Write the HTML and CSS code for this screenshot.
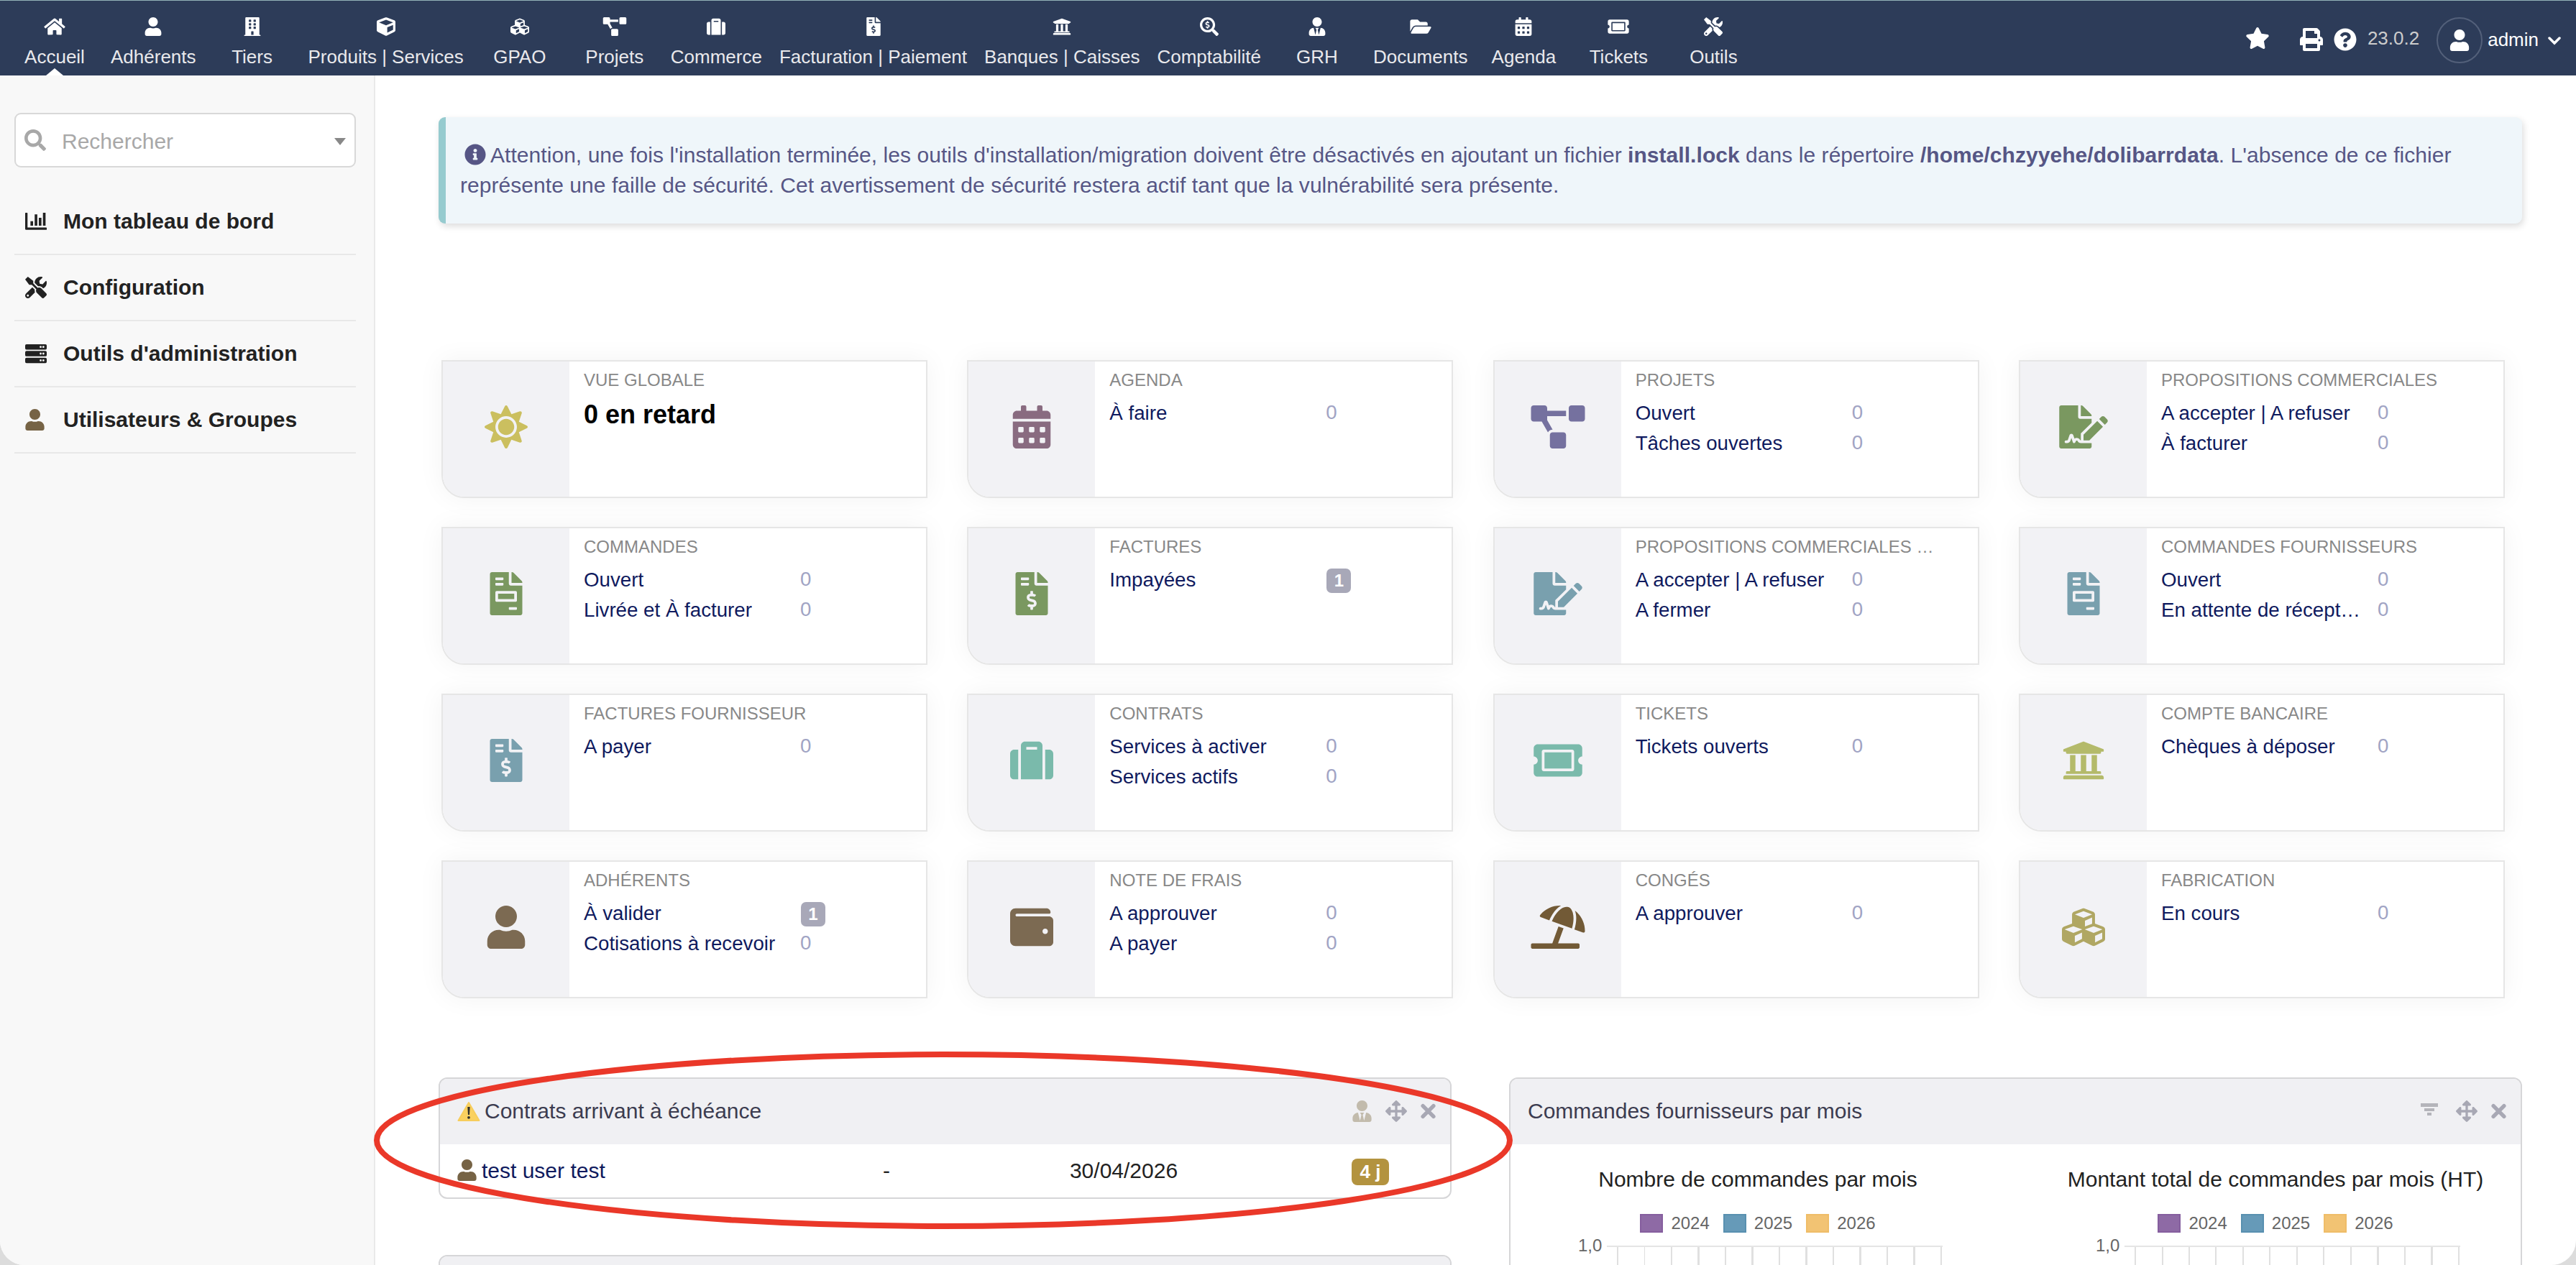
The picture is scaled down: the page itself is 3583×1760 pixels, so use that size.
FILE: index.html
```html
<!DOCTYPE html>
<html lang="fr">
<head>
    <meta charset="UTF-8">
    <meta name="viewport" content="width=device-width, initial-scale=1.0">
    <title>Dolibarr - Accueil</title>
    <link rel="stylesheet" href="styles.css">
</head>
<body>

<!-- Icons -->
<svg class="sprite">
    <symbol id="home" viewBox="0 0 576 512"><path d="M280.37 148.26L96 300.11V464a16 16 0 0 0 16 16l112.06-.29a16 16 0 0 0 15.92-16V368a16 16 0 0 1 16-16h64a16 16 0 0 1 16 16v95.64a16 16 0 0 0 16 16.05L464 480a16 16 0 0 0 16-16V300L295.67 148.26a12.19 12.19 0 0 0-15.3 0zM571.6 251.47L488 182.56V44.05a12 12 0 0 0-12-12h-56a12 12 0 0 0-12 12v72.61L318.47 43a48 48 0 0 0-61 0L4.34 251.47a12 12 0 0 0-1.6 16.9l25.5 31A12 12 0 0 0 45.15 301l235.22-193.74a12.19 12.19 0 0 1 15.3 0L530.9 301a12 12 0 0 0 16.9-1.6l25.5-31a12 12 0 0 0-1.7-16.93z"/></symbol>
    <symbol id="user" viewBox="0 0 448 512"><path d="M224 256c70.7 0 128-57.3 128-128S294.7 0 224 0 96 57.3 96 128s57.3 128 128 128zm89.6 32h-16.7c-22.2 10.2-46.9 16-72.9 16s-50.6-5.8-72.9-16h-16.7C60.2 288 0 348.2 0 422.4V464c0 26.5 21.5 48 48 48h352c26.5 0 48-21.5 48-48v-41.6c0-74.2-60.2-134.4-134.4-134.4z"/></symbol>
    <symbol id="building" viewBox="0 0 448 512"><path d="M436 480h-20V24c0-13.255-10.745-24-24-24H56C42.745 0 32 10.745 32 24v456H12c-6.627 0-12 5.373-12 12v20h448v-20c0-6.627-5.373-12-12-12zM128 76c0-6.627 5.373-12 12-12h40c6.627 0 12 5.373 12 12v40c0 6.627-5.373 12-12 12h-40c-6.627 0-12-5.373-12-12V76zm0 96c0-6.627 5.373-12 12-12h40c6.627 0 12 5.373 12 12v40c0 6.627-5.373 12-12 12h-40c-6.627 0-12-5.373-12-12v-40zm52 148h-40c-6.627 0-12-5.373-12-12v-40c0-6.627 5.373-12 12-12h40c6.627 0 12 5.373 12 12v40c0 6.627-5.373 12-12 12zm76 160h-64v-84c0-6.627 5.373-12 12-12h40c6.627 0 12 5.373 12 12v84zm64-172c0 6.627-5.373 12-12 12h-40c-6.627 0-12-5.373-12-12v-40c0-6.627 5.373-12 12-12h40c6.627 0 12 5.373 12 12v40zm0-96c0 6.627-5.373 12-12 12h-40c-6.627 0-12-5.373-12-12v-40c0-6.627 5.373-12 12-12h40c6.627 0 12 5.373 12 12v40zm0-96c0 6.627-5.373 12-12 12h-40c-6.627 0-12-5.373-12-12V76c0-6.627 5.373-12 12-12h40c6.627 0 12 5.373 12 12v40z"/></symbol>
    <symbol id="cube" viewBox="0 0 512 512"><path d="M239.1 6.3l-208 78c-18.7 7-31.1 25-31.1 45v225.1c0 18.2 10.3 34.8 26.5 42.9l208 104c13.5 6.8 29.4 6.8 42.9 0l208-104c16.3-8.1 26.5-24.8 26.5-42.9V129.3c0-20-12.4-37.9-31.1-44.9l-208-78C262 2.2 250 2.2 239.1 6.3zM256 68.4l192 72v1.1l-192 78-192-78v-1.1l192-72zm32 356V275.5l160-65v133.9l-160 80z"/></symbol>
    <symbol id="cubes" viewBox="0 0 512 512"><path d="M488.6 250.2L392 214V105.5c0-15-9.3-28.4-23.4-33.7l-100-37.5c-8.1-3.1-17.1-3.1-25.3 0l-100 37.5c-14.1 5.3-23.4 18.7-23.4 33.7V214l-96.6 36.2C9.3 255.5 0 268.9 0 283.9V394c0 13.6 7.7 26.1 19.9 32.2l100 50c10.1 5.1 22.1 5.1 32.2 0l103.9-52 103.9 52c10.1 5.1 22.1 5.1 32.2 0l100-50c12.2-6.1 19.9-18.6 19.9-32.2V283.9c0-15-9.3-28.4-23.4-33.7zM358 214.8l-85 31.9v-68.2l85-37v73.3zM154 104.1l102-38.2 102 38.2v.6l-102 41.4-102-41.4v-.6zm84 291.1l-85 42.5v-79.1l85-38.8v75.4zm0-112l-102 41.4-102-41.4v-.6l102-38.2 102 38.2v.6zm240 112l-85 42.5v-79.1l85-38.8v75.4zm0-112l-102 41.4-102-41.4v-.6l102-38.2 102 38.2v.6z"/></symbol>
    <symbol id="project" viewBox="0 0 640 512"><path d="M384 320H256c-17.67 0-32 14.33-32 32v128c0 17.67 14.33 32 32 32h128c17.67 0 32-14.33 32-32V352c0-17.67-14.33-32-32-32zM192 32c0-17.67-14.33-32-32-32H32C14.33 0 0 14.33 0 32v128c0 17.67 14.33 32 32 32h95.72l73.16 128.04C211.98 300.98 232.4 288 256 288h.28L192 175.51V128h224V64H192V32zM608 0H480c-17.67 0-32 14.33-32 32v128c0 17.67 14.33 32 32 32h128c17.67 0 32-14.33 32-32V32c0-17.67-14.33-32-32-32z"/></symbol>
    <symbol id="suitcase" viewBox="0 0 512 512"><path d="M128 480h256V80c0-26.5-21.5-48-48-48H176c-26.5 0-48 21.5-48 48v400zm64-384h128v32H192V96zm320 80v256c0 26.5-21.5 48-48 48h-48V128h48c26.5 0 48 21.5 48 48zM96 480H48c-26.5 0-48-21.5-48-48V176c0-26.5 21.5-48 48-48h48v352z"/></symbol>
    <symbol id="invoice-dollar" viewBox="0 0 384 512"><path d="M377 105L279.1 7c-4.5-4.5-10.6-7-17-7H256v128h128v-6.1c0-6.3-2.5-12.4-7-16.9zm-153 31V0H24C10.7 0 0 10.7 0 24v464c0 13.3 10.7 24 24 24h336c13.3 0 24-10.7 24-24V160H248c-13.2 0-24-10.8-24-24zM64 72c0-4.42 3.58-8 8-8h80c4.42 0 8 3.58 8 8v16c0 4.42-3.58 8-8 8H72c-4.42 0-8-3.58-8-8V72zm0 80v-16c0-4.42 3.58-8 8-8h80c4.42 0 8 3.58 8 8v16c0 4.42-3.58 8-8 8H72c-4.42 0-8-3.58-8-8zm144 263.88V440c0 4.42-3.58 8-8 8h-16c-4.42 0-8-3.58-8-8v-24.29c-11.29-.58-22.27-4.52-31.37-11.35-3.9-2.93-4.1-8.77-.57-12.14l11.75-11.21c2.77-2.64 6.89-2.76 10.13-.73 3.87 2.42 8.26 3.72 12.82 3.72h28.11c6.5 0 11.8-5.92 11.8-13.19 0-5.95-3.61-11.19-8.77-12.73l-45-13.5c-18.59-5.58-31.58-23.42-31.58-43.39 0-24.52 19.05-44.44 42.67-45.07V232c0-4.42 3.58-8 8-8h16c4.42 0 8 3.58 8 8v24.29c11.29.58 22.27 4.51 31.37 11.35 3.9 2.93 4.1 8.77.57 12.14l-11.75 11.21c-2.77 2.64-6.89 2.76-10.13.73-3.87-2.43-8.26-3.72-12.82-3.72h-28.11c-6.5 0-11.8 5.92-11.8 13.19 0 5.95 3.61 11.19 8.77 12.73l45 13.5c18.59 5.58 31.58 23.42 31.58 43.39 0 24.53-19.05 44.44-42.67 45.07z"/></symbol>
    <symbol id="invoice" viewBox="0 0 384 512"><path d="M288 256H96v64h192v-64zm89-151L279.1 7c-4.5-4.5-10.6-7-17-7H256v128h128v-6.1c0-6.3-2.5-12.4-7-16.9zm-153 31V0H24C10.7 0 0 10.7 0 24v464c0 13.3 10.7 24 24 24h336c13.3 0 24-10.7 24-24V160H248c-13.2 0-24-10.8-24-24zM64 72c0-4.42 3.58-8 8-8h80c4.42 0 8 3.58 8 8v16c0 4.42-3.58 8-8 8H72c-4.42 0-8-3.58-8-8V72zm0 64c0-4.42 3.58-8 8-8h80c4.42 0 8 3.58 8 8v16c0 4.42-3.58 8-8 8H72c-4.42 0-8-3.58-8-8v-16zm256 304c0 4.42-3.58 8-8 8h-80c-4.42 0-8-3.58-8-8v-16c0-4.42 3.58-8 8-8h80c4.42 0 8 3.58 8 8v16zm0-200v96c0 8.84-7.16 16-16 16H80c-8.84 0-16-7.16-16-16v-96c0-8.84 7.16-16 16-16h224c8.84 0 16 7.16 16 16z"/></symbol>
    <symbol id="bank" viewBox="0 0 512 512"><path d="M496 128v16a8 8 0 0 1-8 8h-24v12c0 6.627-5.373 12-12 12H60c-6.627 0-12-5.373-12-12v-12H24a8 8 0 0 1-8-8v-16a8 8 0 0 1 4.941-7.392l232-88a7.996 7.996 0 0 1 6.118 0l232 88A8 8 0 0 1 496 128zm-24 304H40c-13.255 0-24 10.745-24 24v16a8 8 0 0 0 8 8h464a8 8 0 0 0 8-8v-16c0-13.255-10.745-24-24-24zM96 192v192H60c-6.627 0-12 5.373-12 12v20h416v-20c0-6.627-5.373-12-12-12h-36V192h-64v192h-64V192h-64v192h-64V192H96z"/></symbol>
    <symbol id="search-dollar" viewBox="0 0 512 512"><path d="M505.04 442.66l-99.71-99.69c-4.5-4.5-10.6-7-17-7h-16.3c27.6-35.3 44-79.69 44-127.99C416.03 93.09 322.92 0 208.02 0S0 93.09 0 207.98s93.11 207.98 208.02 207.98c48.3 0 92.71-16.4 128.01-44v16.3c0 6.4 2.5 12.5 7 17l99.71 99.69c9.4 9.4 24.6 9.4 33.9 0l28.3-28.3c9.4-9.4 9.4-24.59.1-33.99zm-297.02-90.7c-79.54 0-144-64.34-144-143.98 0-79.53 64.35-143.98 144-143.98 79.54 0 144 64.34 144 143.98 0 79.53-64.35 143.98-144 143.98zm27.11-152.54l-45.01-13.5c-5.16-1.55-8.77-6.78-8.77-12.73 0-7.27 5.3-13.19 11.8-13.19h28.1c4.56 0 8.96 1.29 12.82 3.72 3.24 2.03 7.36 1.91 10.13-.73l11.75-11.21c3.53-3.37 3.33-9.21-.57-12.14-9.1-6.83-20.08-10.77-31.37-11.35V112c0-4.42-3.58-8-8-8h-16c-4.42 0-8 3.58-8 8v16.12c-23.63.63-42.68 20.55-42.68 45.07 0 19.97 12.99 37.81 31.58 43.39l45.01 13.5c5.16 1.55 8.77 6.78 8.77 12.73 0 7.27-5.3 13.19-11.8 13.19h-28.1c-4.56 0-8.96-1.29-12.82-3.72-3.24-2.03-7.36-1.91-10.13.73l-11.75 11.21c-3.53 3.37-3.33 9.21.57 12.14 9.1 6.83 20.08 10.77 31.37 11.35V304c0 4.42 3.58 8 8 8h16c4.42 0 8-3.58 8-8v-16.12c23.63-.63 42.68-20.54 42.68-45.07 0-19.97-12.99-37.81-31.59-43.39z"/></symbol>
    <symbol id="user-tie" viewBox="0 0 448 512"><path d="M224 256c70.7 0 128-57.3 128-128S294.7 0 224 0 96 57.3 96 128s57.3 128 128 128zm95.8 32.6L272 480l-32-136 32-56h-96l32 56-32 136-47.8-191.4C56.9 292 0 350.3 0 422.4V464c0 26.5 21.5 48 48 48h352c26.5 0 48-21.5 48-48v-41.6c0-72.1-56.9-130.4-128.2-133.8z"/></symbol>
    <symbol id="folder" viewBox="0 0 576 512"><path d="M572.694 292.093L500.27 416.248A63.997 63.997 0 0 1 444.989 448H45.025c-18.523 0-30.064-20.093-20.731-36.093l72.424-124.155A64 64 0 0 1 152 256h399.964c18.523 0 30.064 20.093 20.73 36.093zM152 224h328v-48c0-26.51-21.49-48-48-48H272l-64-64H48C21.49 64 0 85.49 0 112v278.046l69.077-118.418C86.214 242.25 117.989 224 152 224z"/></symbol>
    <symbol id="calendar" viewBox="0 0 448 512"><path fill-rule="evenodd" d="M0 464c0 26.5 21.5 48 48 48h352c26.5 0 48-21.5 48-48V192H0v272zM332 256h40q12 0 12 12v40q0 12-12 12h-40q-12 0-12-12v-40q0-12 12-12zM332 384h40q12 0 12 12v40q0 12-12 12h-40q-12 0-12-12v-40q0-12 12-12zM204 256h40q12 0 12 12v40q0 12-12 12h-40q-12 0-12-12v-40q0-12 12-12zM204 384h40q12 0 12 12v40q0 12-12 12h-40q-12 0-12-12v-40q0-12 12-12zM76 256h40q12 0 12 12v40q0 12-12 12H76q-12 0-12-12v-40q0-12 12-12zM76 384h40q12 0 12 12v40q0 12-12 12H76q-12 0-12-12v-40q0-12 12-12zM400 64h-48V16c0-8.8-7.2-16-16-16h-32c-8.8 0-16 7.2-16 16v48H160V16c0-8.8-7.2-16-16-16h-32c-8.8 0-16 7.2-16 16v48H48C21.5 64 0 85.5 0 112v48h448v-48c0-26.5-21.5-48-48-48z"/></symbol>
    <symbol id="ticket" viewBox="0 0 576 512"><path d="M128 160h320v192H128V160zm400 96c0 26.51 21.49 48 48 48v96c0 26.51-21.49 48-48 48H48c-26.51 0-48-21.49-48-48v-96c26.51 0 48-21.49 48-48s-21.49-48-48-48v-96c0-26.51 21.49-48 48-48h480c26.51 0 48 21.49 48 48v96c-26.51 0-48 21.49-48 48zm-48-104c0-13.255-10.745-24-24-24H120c-13.255 0-24 10.745-24 24v208c0 13.255 10.745 24 24 24h336c13.255 0 24-10.745 24-24V152z"/></symbol>
    <symbol id="tools" viewBox="0 0 512 512"><path d="M501.1 395.7L384 278.6c-23.1-23.1-57.6-27.6-85.4-13.9L192 158.1V96L64 0 0 64l96 128h62.1l106.6 106.6c-13.6 27.8-9.2 62.3 13.9 85.4l117.1 117.1c14.6 14.6 38.2 14.6 52.7 0l52.7-52.7c14.5-14.6 14.5-38.2 0-52.7zM331.7 225c28.3 0 54.9 11 74.9 31l19.4 19.4c15.8-6.9 30.8-16.5 43.8-29.5 37.1-37.1 49.7-89.3 37.9-136.7-2.2-9-13.5-12.1-20.1-5.5l-74.4 74.4-67.9-11.3L334 98.9l74.4-74.4c6.6-6.6 3.4-17.9-5.7-20.2-47.4-11.7-99.6.9-136.6 37.9-28.5 28.5-41.9 66.1-41.2 103.6l82.1 82.1c8.1-1.9 16.5-2.9 24.7-2.9zm-103.9 82l-56.7-56.7L18.7 402.8c-25 25-25 65.5 0 90.5s65.5 25 90.5 0l123.6-123.6c-7.6-19.9-9.9-41.6-5-62.7zM64 472c-13.2 0-24-10.8-24-24 0-13.3 10.7-24 24-24s24 10.7 24 24c0 13.2-10.7 24-24 24z"/></symbol>
    <symbol id="star" viewBox="0 0 576 512"><path d="M259.3 17.8L194 150.2 47.9 171.5c-26.2 3.8-36.7 36.1-17.7 54.6l105.7 103-25 145.5c-4.5 26.3 23.2 46 46.4 33.7L288 439.6l130.7 68.7c23.2 12.2 50.9-7.4 46.4-33.7l-25-145.5 105.7-103c19-18.5 8.5-50.8-17.7-54.6L382 150.2 316.7 17.8c-11.7-23.6-45.6-23.9-57.4 0z"/></symbol>
    <symbol id="print" viewBox="0 0 512 512"><path d="M448 192V77.25c0-8.49-3.37-16.62-9.37-22.63L393.37 9.37c-6-6-14.14-9.37-22.63-9.37H96C78.33 0 64 14.33 64 32v160c-35.35 0-64 28.65-64 64v112c0 8.84 7.16 16 16 16h48v96c0 17.67 14.33 32 32 32h320c17.67 0 32-14.33 32-32v-96h48c8.84 0 16-7.16 16-16V256c0-35.35-28.65-64-64-64zm-64 256H128v-96h256v96zm0-224H128V64h192v48c0 8.84 7.16 16 16 16h48v96zm48 72c-13.25 0-24-10.75-24-24 0-13.26 10.75-24 24-24s24 10.74 24 24c0 13.25-10.75 24-24 24z"/></symbol>
    <symbol id="help" viewBox="0 0 512 512"><path d="M504 256c0 136.997-111.043 248-248 248S8 392.997 8 256C8 119.083 119.043 8 256 8s248 111.083 248 248zM262.655 90c-54.497 0-89.255 22.957-116.549 63.758-3.536 5.286-2.353 12.415 2.715 16.258l34.699 26.31c5.205 3.947 12.621 3.008 16.665-2.122 17.864-22.658 30.113-35.797 57.303-35.797 20.429 0 45.698 13.148 45.698 32.958 0 14.976-12.363 22.667-32.534 33.976C247.128 238.528 216 254.941 216 296v4c0 6.627 5.373 12 12 12h56c6.627 0 12-5.373 12-12v-1.333c0-28.462 83.186-29.647 83.186-106.667 0-58.002-60.165-102-116.531-102zM256 338c-25.365 0-46 20.635-46 46 0 25.364 20.635 46 46 46s46-20.636 46-46c0-25.365-20.635-46-46-46z"/></symbol>
    <symbol id="info" viewBox="0 0 512 512"><path d="M256 8C119.043 8 8 119.083 8 256c0 136.997 111.043 248 248 248s248-111.003 248-248C504 119.083 392.957 8 256 8zm0 110c23.196 0 42 18.804 42 42s-18.804 42-42 42-42-18.804-42-42 18.804-42 42-42zm56 254c0 6.627-5.373 12-12 12h-88c-6.627 0-12-5.373-12-12v-24c0-6.627 5.373-12 12-12h12v-64h-12c-6.627 0-12-5.373-12-12v-24c0-6.627 5.373-12 12-12h64c6.627 0 12 5.373 12 12v100h12c6.627 0 12 5.373 12 12v24z"/></symbol>
    <symbol id="search" viewBox="0 0 512 512"><path d="M505 442.7L405.3 343c-4.5-4.5-10.6-7-17-7H372c27.6-35.3 44-79.7 44-128C416 93.1 322.9 0 208 0S0 93.1 0 208s93.1 208 208 208c48.3 0 92.7-16.4 128-44v16.3c0 6.4 2.5 12.5 7 17l99.7 99.7c9.4 9.4 24.6 9.4 33.9 0l28.3-28.3c9.4-9.4 9.4-24.6.1-34zM208 336c-70.7 0-128-57.2-128-128 0-70.7 57.2-128 128-128 70.7 0 128 57.2 128 128 0 70.7-57.2 128-128 128z"/></symbol>
    <symbol id="chart" viewBox="0 0 512 512"><path d="M12 50h32q12 0 12 12v340h444q12 0 12 12v32q0 12-12 12H24q-24 0-24-24V62q0-12 12-12z"/><path d="M126 252h62v106h-62zM226 90h62v268h-62zM324 170h62v188h-62zM422 50h62v308h-62z"/></symbol>
    <symbol id="server" viewBox="0 0 512 512"><path fill-rule="evenodd" d="M32 32h448q32 0 32 32v64q0 32-32 32H32q-32 0-32-32V64q0-32 32-32zM344 96a24 24 0 1 0 48 0a24 24 0 1 0-48 0zM408 96a24 24 0 1 0 48 0a24 24 0 1 0-48 0zM32 192h448q32 0 32 32v64q0 32-32 32H32q-32 0-32-32v-64q0-32 32-32zM344 256a24 24 0 1 0 48 0a24 24 0 1 0-48 0zM408 256a24 24 0 1 0 48 0a24 24 0 1 0-48 0zM32 352h448q32 0 32 32v64q0 32-32 32H32q-32 0-32-32v-64q0-32 32-32zM344 416a24 24 0 1 0 48 0a24 24 0 1 0-48 0zM408 416a24 24 0 1 0 48 0a24 24 0 1 0-48 0z"/></symbol>
    <symbol id="sun" viewBox="0 0 512 512"><path d="M256 160c-52.9 0-96 43.1-96 96s43.1 96 96 96 96-43.1 96-96-43.1-96-96-96zm246.4 80.5l-94.7-47.3 33.5-100.4c4.5-13.6-8.4-26.5-21.9-21.9l-100.4 33.5-47.4-94.8c-6.4-12.8-24.6-12.8-31 0l-47.3 94.7L92.7 70.8c-13.6-4.5-26.5 8.4-21.9 21.9l33.5 100.4-94.7 47.4c-12.8 6.4-12.8 24.6 0 31l94.7 47.3-33.5 100.5c-4.5 13.6 8.4 26.5 21.9 21.9l100.4-33.5 47.3 94.7c6.4 12.8 24.6 12.8 31 0l47.3-94.7 100.4 33.5c13.6 4.5 26.5-8.4 21.9-21.9l-33.5-100.4 94.7-47.3c13-6.5 13-24.7.2-31.1zm-155.9 106c-49.9 49.9-131.1 49.9-181 0-49.9-49.9-49.9-131.1 0-181 49.9-49.9 131.1-49.9 181 0 49.9 49.9 49.9 131.1 0 181z"/></symbol>
    <symbol id="signature" viewBox="0 0 576 512"><path d="M218.17 424.14c-2.95-5.92-8.09-6.52-10.17-6.52s-7.22.59-10.02 6.19l-7.67 15.34c-6.37 12.78-25.03 11.37-29.48-2.09L144 386.59l-10.61 31.88c-5.89 17.66-22.38 29.53-41 29.53H80c-8.84 0-16-7.16-16-16s7.16-16 16-16h12.39c4.83 0 9.11-3.08 10.64-7.66l18.19-54.64c3.3-9.81 12.44-16.41 22.78-16.41s19.48 6.59 22.77 16.41l13.88 41.64c19.75-16.19 54.06-9.7 66 14.16 1.89 3.78 5.49 5.95 9.36 6.26v-82.12l128-127.09V160H248c-13.2 0-24-10.8-24-24V0H24C10.7 0 0 10.7 0 24v464c0 13.3 10.7 24 24 24h336c13.3 0 24-10.7 24-24v-40l-128-.11c-16.12-.31-30.58-9.28-37.83-23.75zM384 121.9c0-6.3-2.5-12.4-7-16.9L279.1 7c-4.5-4.5-10.6-7-17-7H256v128h128v-6.1zm-96 225.06V416h68.99l161.68-162.78-67.88-67.88L288 346.96zm280.54-179.63l-31.87-31.87c-9.94-9.94-26.07-9.94-36.01 0l-27.25 27.25 67.88 67.88 27.25-27.25c9.95-9.94 9.95-26.07 0-36.01z"/></symbol>
    <symbol id="wallet" viewBox="0 0 512 512"><path d="M461.2 128H80c-8.84 0-16-7.16-16-16s7.16-16 16-16h384c8.84 0 16-7.16 16-16 0-26.51-21.49-48-48-48H64C28.65 32 0 60.65 0 96v320c0 35.35 28.65 64 64 64h397.2c28.02 0 50.8-21.53 50.8-48V176c0-26.47-22.78-48-50.8-48zM416 336c-17.67 0-32-14.33-32-32s14.33-32 32-32 32 14.33 32 32-14.33 32-32 32z"/></symbol>
    <symbol id="beach" viewBox="0 0 640 512"><path d="M115.38 136.9l102.11 37.18c35.19-81.54 86.21-144.29 139-173.7-95.88-4.89-188.78 36.96-248.53 111.8-6.69 8.4-2.66 21.05 7.42 24.72zm132.25 48.16l238.48 86.83c35.76-121.38 18.7-231.66-42.63-253.98-7.4-2.7-15.13-4-23.09-4-58.02.01-128.27 69.17-172.76 171.15zM521.48 60.5c6.22 16.3 10.83 34.6 13.2 55.19 5.74 49.89-1.42 108.23-18.95 166.98l102.62 37.36c10.09 3.67 21.31-3.43 21.57-14.17 2.32-95.69-41.91-187.44-118.44-245.36zM560 447.98H321.06L386 269.5l-60.14-21.9-72.9 200.37H16c-8.84 0-16 7.16-16 16.01v32.01C0 504.83 7.16 512 16 512h544c8.84 0 16-7.16 16-16.01v-32.01c0-8.84-7.16-16-16-16z"/></symbol>
    <symbol id="arrows" viewBox="0 0 512 512"><path d="M352.201 425.775l-79.196 79.196c-9.373 9.373-24.568 9.373-33.941 0l-79.196-79.196c-15.119-15.119-4.411-40.971 16.971-40.97h51.162L228 284H127.196v51.162c0 21.382-25.851 32.09-40.971 16.971L7.029 272.937c-9.373-9.373-9.373-24.569 0-33.941L86.225 159.8c15.119-15.119 40.971-4.411 40.971 16.971V228H228V127.196h-51.23c-21.382 0-32.09-25.851-16.971-40.971l79.196-79.196c9.373-9.373 24.568-9.373 33.941 0l79.196 79.196c15.119 15.119 4.411 40.971-16.971 40.971h-51.162V228h100.804v-51.162c0-21.382 25.851-32.09 40.97-16.971l79.196 79.196c9.373 9.373 9.373 24.569 0 33.941L425.773 352.2c-15.119 15.119-40.971 4.411-40.97-16.971V284H284v100.804h51.23c21.382 0 32.09 25.851 16.971 40.971z"/></symbol>
    <symbol id="times" viewBox="0 0 352 512"><path d="M50 130L302 382M302 130L50 382" fill="none" stroke="currentColor" stroke-width="92" stroke-linecap="round"/></symbol>
    <symbol id="filter" viewBox="0 0 24 30"><path d="M0 4h24v5H0zM5 11h14v4H5zM9 17h6v4H9z"/></symbol>
    <symbol id="chevron" viewBox="0 0 20 14"><path d="M3 3l7 7 7-7" fill="none" stroke="currentColor" stroke-width="3.5" stroke-linecap="round"/></symbol>
    <symbol id="warning" viewBox="0 0 32 28"><path d="M16 2L30.500 27H1.500z" fill="#fad15f" stroke="#f7cd5c" stroke-width="2" stroke-linejoin="round"/><path d="M14.300 8h3.400l-.7 11h-2z" fill="#33322c"/><circle cx="16" cy="22.800" r="1.900" fill="#33322c"/></symbol>
</svg>

<div class="page">

    <header class="topbar">
        <nav class="topmenu">
            <a class="topitem active"><svg class="icon"><use href="#home"/></svg>Accueil</a>
            <a class="topitem"><svg class="icon"><use href="#user"/></svg>Adhérents</a>
            <a class="topitem"><svg class="icon"><use href="#building"/></svg>Tiers</a>
            <a class="topitem"><svg class="icon"><use href="#cube"/></svg>Produits | Services</a>
            <a class="topitem"><svg class="icon"><use href="#cubes"/></svg>GPAO</a>
            <a class="topitem"><svg class="icon"><use href="#project"/></svg>Projets</a>
            <a class="topitem"><svg class="icon"><use href="#suitcase"/></svg>Commerce</a>
            <a class="topitem"><svg class="icon"><use href="#invoice-dollar"/></svg>Facturation | Paiement</a>
            <a class="topitem"><svg class="icon"><use href="#bank"/></svg>Banques | Caisses</a>
            <a class="topitem"><svg class="icon"><use href="#search-dollar"/></svg>Comptabilité</a>
            <a class="topitem"><svg class="icon"><use href="#user-tie"/></svg>GRH</a>
            <a class="topitem"><svg class="icon"><use href="#folder"/></svg>Documents</a>
            <a class="topitem"><svg class="icon"><use href="#calendar"/></svg>Agenda</a>
            <a class="topitem"><svg class="icon"><use href="#ticket"/></svg>Tickets</a>
            <a class="topitem"><svg class="icon"><use href="#tools"/></svg>Outils</a>
        </nav>
        <div class="login-block">
            <svg class="icon star"><use href="#star"/></svg>
            <svg class="icon print"><use href="#print"/></svg>
            <svg class="icon help"><use href="#help"/></svg>
            <span class="version">23.0.2</span>
            <span class="avatar"><svg class="icon"><use href="#user"/></svg></span>
            <span class="username">admin</span>
            <svg class="icon chevron"><use href="#chevron"/></svg>
        </div>
    </header>

    <div class="layout">

        <aside class="sidebar">
            <div class="search-box">
                <svg class="icon"><use href="#search"/></svg>
                <span>Rechercher</span>
                <i class="caret"></i>
            </div>
            <nav class="sidemenu">
                <a><span class="side-icon"><svg class="icon"><use href="#chart"/></svg></span>Mon tableau de bord</a>
                <a><span class="side-icon"><svg class="icon"><use href="#tools"/></svg></span>Configuration</a>
                <a><span class="side-icon"><svg class="icon"><use href="#server"/></svg></span>Outils d'administration</a>
                <a><span class="side-icon"><svg class="icon user-icon"><use href="#user"/></svg></span>Utilisateurs &amp; Groupes</a>
            </nav>
        </aside>

        <main class="content">

            <div class="info">
                <svg class="icon"><use href="#info"/></svg>Attention, une fois l'installation terminée, les outils d'installation/migration doivent être désactivés en ajoutant un fichier <b>install.lock</b> dans le répertoire <b>/home/chzyyehe/dolibarrdata</b>. L'absence de ce fichier<br>
                représente une faille de sécurité. Cet avertissement de sécurité restera actif tant que la vulnérabilité sera présente.
            </div>

            <section class="cards">
                <div class="card">
                    <div class="card-icon global"><svg class="icon"><use href="#sun"/></svg></div>
                    <div class="card-body">
                        <h3>VUE GLOBALE</h3>
                        <p class="late">0 en retard</p>
                    </div>
                </div>
                <div class="card">
                    <div class="card-icon agenda"><svg class="icon"><use href="#calendar"/></svg></div>
                    <div class="card-body">
                        <h3>AGENDA</h3>
                        <p><span>À faire</span><em>0</em></p>
                    </div>
                </div>
                <div class="card">
                    <div class="card-icon projets"><svg class="icon"><use href="#project"/></svg></div>
                    <div class="card-body">
                        <h3>PROJETS</h3>
                        <p><span>Ouvert</span><em>0</em></p>
                        <p><span>Tâches ouvertes</span><em>0</em></p>
                    </div>
                </div>
                <div class="card">
                    <div class="card-icon client"><svg class="icon"><use href="#signature"/></svg></div>
                    <div class="card-body">
                        <h3>PROPOSITIONS COMMERCIALES</h3>
                        <p><span>A accepter | A refuser</span><em>0</em></p>
                        <p><span>À facturer</span><em>0</em></p>
                    </div>
                </div>

                <div class="card">
                    <div class="card-icon client"><svg class="icon"><use href="#invoice"/></svg></div>
                    <div class="card-body">
                        <h3>COMMANDES</h3>
                        <p><span>Ouvert</span><em>0</em></p>
                        <p><span>Livrée et À facturer</span><em>0</em></p>
                    </div>
                </div>
                <div class="card">
                    <div class="card-icon client"><svg class="icon"><use href="#invoice-dollar"/></svg></div>
                    <div class="card-body">
                        <h3>FACTURES</h3>
                        <p><span>Impayées</span><em class="badge">1</em></p>
                    </div>
                </div>
                <div class="card">
                    <div class="card-icon fournisseur"><svg class="icon"><use href="#signature"/></svg></div>
                    <div class="card-body">
                        <h3>PROPOSITIONS COMMERCIALES …</h3>
                        <p><span>A accepter | A refuser</span><em>0</em></p>
                        <p><span>A fermer</span><em>0</em></p>
                    </div>
                </div>
                <div class="card">
                    <div class="card-icon fournisseur"><svg class="icon"><use href="#invoice"/></svg></div>
                    <div class="card-body">
                        <h3>COMMANDES FOURNISSEURS</h3>
                        <p><span>Ouvert</span><em>0</em></p>
                        <p><span>En attente de récept…</span><em>0</em></p>
                    </div>
                </div>

                <div class="card">
                    <div class="card-icon fournisseur"><svg class="icon"><use href="#invoice-dollar"/></svg></div>
                    <div class="card-body">
                        <h3>FACTURES FOURNISSEUR</h3>
                        <p><span>A payer</span><em>0</em></p>
                    </div>
                </div>
                <div class="card">
                    <div class="card-icon contrat"><svg class="icon"><use href="#suitcase"/></svg></div>
                    <div class="card-body">
                        <h3>CONTRATS</h3>
                        <p><span>Services à activer</span><em>0</em></p>
                        <p><span>Services actifs</span><em>0</em></p>
                    </div>
                </div>
                <div class="card">
                    <div class="card-icon contrat"><svg class="icon"><use href="#ticket"/></svg></div>
                    <div class="card-body">
                        <h3>TICKETS</h3>
                        <p><span>Tickets ouverts</span><em>0</em></p>
                    </div>
                </div>
                <div class="card">
                    <div class="card-icon banque"><svg class="icon"><use href="#bank"/></svg></div>
                    <div class="card-body">
                        <h3>COMPTE BANCAIRE</h3>
                        <p><span>Chèques à déposer</span><em>0</em></p>
                    </div>
                </div>

                <div class="card">
                    <div class="card-icon rh"><svg class="icon"><use href="#user"/></svg></div>
                    <div class="card-body">
                        <h3>ADHÉRENTS</h3>
                        <p><span>À valider</span><em class="badge">1</em></p>
                        <p><span>Cotisations à recevoir</span><em>0</em></p>
                    </div>
                </div>
                <div class="card">
                    <div class="card-icon rh"><svg class="icon"><use href="#wallet"/></svg></div>
                    <div class="card-body">
                        <h3>NOTE DE FRAIS</h3>
                        <p><span>A approuver</span><em>0</em></p>
                        <p><span>A payer</span><em>0</em></p>
                    </div>
                </div>
                <div class="card">
                    <div class="card-icon conges"><svg class="icon"><use href="#beach"/></svg></div>
                    <div class="card-body">
                        <h3>CONGÉS</h3>
                        <p><span>A approuver</span><em>0</em></p>
                    </div>
                </div>
                <div class="card">
                    <div class="card-icon fabrication"><svg class="icon"><use href="#cubes"/></svg></div>
                    <div class="card-body">
                        <h3>FABRICATION</h3>
                        <p><span>En cours</span><em>0</em></p>
                    </div>
                </div>
            </section>

            <section class="boxes">
                <div class="column">
                    <div class="box contracts">
                        <div class="box-title">
                            <svg class="icon warning"><use href="#warning"/></svg>
                            <span>Contrats arrivant à échéance</span>
                            <div class="box-tools">
                                <svg class="icon tie"><use href="#user-tie"/></svg>
                                <svg class="icon"><use href="#arrows"/></svg>
                                <svg class="icon times"><use href="#times"/></svg>
                            </div>
                        </div>
                        <div class="contract-row">
                            <span class="who"><svg class="icon user-icon"><use href="#user"/></svg>test user test</span>
                            <span class="center">-</span>
                            <span class="center">30/04/2026</span>
                            <b class="days">4 j</b>
                        </div>
                    </div>
                    <div class="box next-box">
                        <div class="box-title"></div>
                    </div>
                </div>

                <div class="column">
                    <div class="box orders">
                        <div class="box-title">
                            <span>Commandes fournisseurs par mois</span>
                            <div class="box-tools">
                                <svg class="icon filter"><use href="#filter"/></svg>
                                <svg class="icon"><use href="#arrows"/></svg>
                                <svg class="icon times"><use href="#times"/></svg>
                            </div>
                        </div>
                        <div class="charts">
                            <div class="chart">
                                <h4>Nombre de commandes par mois</h4>
                                <div class="legend">
                                    <span><i class="y2024"></i>2024</span>
                                    <span><i class="y2025"></i>2025</span>
                                    <span><i class="y2026"></i>2026</span>
                                </div>
                                <div class="plot">
                                    <span>1,0</span>
                                    <div class="grid"></div>
                                </div>
                            </div>
                            <div class="chart">
                                <h4>Montant total de commandes par mois (HT)</h4>
                                <div class="legend">
                                    <span><i class="y2024"></i>2024</span>
                                    <span><i class="y2025"></i>2025</span>
                                    <span><i class="y2026"></i>2026</span>
                                </div>
                                <div class="plot">
                                    <span>1,0</span>
                                    <div class="grid"></div>
                                </div>
                            </div>
                        </div>
                    </div>
                </div>
            </section>

        </main>
    </div>

    <!-- red highlight around the contracts box -->
    <svg class="highlight" viewBox="0 0 1584 247"><ellipse cx="792" cy="123.500" rx="788" ry="119.500"/></svg>

</div>

</body>
</html>
```
FILE: styles.css
```css
* {
    box-sizing: border-box;
}
html {
    background: #dcdcdc;
}
body {
    margin: 0;
    font-family: "Liberation Sans", Arial, sans-serif;
    font-size: 30px;
    color: #222;
}
.sprite {
    display: none;
}
.icon {
    width: 30px;
    height: 30px;
    fill: currentColor;
    flex-shrink: 0;
}
.page {
    position: relative;
    height: 1760px;
    overflow: hidden;
    background: white;
    border-radius: 0 0 34px 34px;
}

/* top bar */
.topbar {
    display: flex;
    justify-content: space-between;
    height: 105px;
    background: #2d3c59;
    border-top: 1px solid #93b3b8;
    color: #e9e9ec;
    font-size: 26px;
}
.topmenu {
    display: flex;
    padding-left: 10px;
}
.topitem {
    display: flex;
    flex-direction: column;
    align-items: center;
    min-width: 132px;
    padding: 23px 12px 0;
    line-height: 30px;
    white-space: nowrap;
    position: relative;
}
.topitem .icon {
    height: 26px;
    width: 34px;
    margin-bottom: 14px;
    color: white;
}
.topitem.active::after {
    content: "";
    position: absolute;
    bottom: 0;
    border: 12px solid transparent;
    border-top: 0;
    border-bottom: 10px solid white;
}
.login-block {
    display: flex;
    align-items: center;
    padding-right: 20px;
    color: white;
}
.login-block .star {
    width: 34px;
    margin-right: 42px;
}
.login-block .print, .login-block .help {
    width: 32px;
    height: 32px;
    margin: 3px 15px 0 0;
}
.version {
    color: #ccc;
    margin-right: 24px;
}
.avatar {
    display: flex;
    align-items: center;
    justify-content: center;
    width: 64px;
    height: 64px;
    margin: 5px 7px 0 0;
    border: 2px solid #53607a;
    border-radius: 50%;
}
.username {
    margin: 4px 12px 0 0;
}
.login-block .chevron {
    width: 20px;
    height: 14px;
    margin-top: 7px;
}

/* left menu */
.layout {
    display: flex;
}
.sidebar {
    width: 522px;
    height: 1655px;
    padding: 52px 25px 0 20px;
    background: #f8f8f8;
    border-right: 2px solid #e9e9e9;
}
.search-box {
    display: flex;
    align-items: center;
    height: 76px;
    margin-bottom: 30px;
    padding: 0 12px;
    background: white;
    border: 2px solid #d8d8d8;
    border-radius: 9px;
    color: #a8a8a8;
}
.search-box span {
    flex: 1;
    padding: 3px 0 0 22px;
}
.caret {
    margin-top: 4px;
    border: 8px solid transparent;
    border-top: 10px solid #888;
    border-bottom: 0;
}
.sidemenu a {
    display: flex;
    align-items: center;
    height: 92px;
    padding: 0 0 1px 15px;
    border-bottom: 2px solid #e8e8e8;
    font-weight: bold;
}
.side-icon {
    display: flex;
    width: 53px;
}
.user-icon {
    width: 27px;
    color: #766345;
}

/* content */
.content {
    flex: 1;
    padding: 58px 75px 0 88px;
}
.info {
    height: 148px;
    padding: 32px 20px 0;
    background: #eff6fa;
    border-left: 10px solid #96cbcf;
    border-radius: 9px;
    box-shadow: 2px 4px 10px #ddd;
    color: #565685;
    line-height: 42px;
    letter-spacing: 0.05px;
    white-space: nowrap;
}
.info .icon {
    margin: 0 6px 0 6px;
    vertical-align: -4px;
}

/* dashboard cards */
.cards {
    display: grid;
    grid-template-columns: repeat(4, 676px);
    justify-content: space-between;
    row-gap: 40px;
    margin: 190px 24px 0 4px;
}
.card {
    display: flex;
    height: 192px;
    background: white;
    border: 2px solid #e6e6e6;
    border-bottom-left-radius: 32px;
    box-shadow: 0 0 36px rgba(0, 0, 0, 0.05);
    overflow: hidden;
}
.card-icon {
    display: flex;
    align-items: center;
    justify-content: center;
    width: 176px;
    padding-bottom: 6px;
    background: #f2f2f5;
}
.card-icon .icon {
    width: 76px;
    height: 60px;
}
.card-body {
    flex: 1;
    padding: 10px 0 0 20px;
}
.card h3 {
    margin: 0 0 9px;
    font-size: 24px;
    font-weight: normal;
    line-height: 32px;
    color: #888;
}
.card p {
    display: flex;
    align-items: center;
    height: 42px;
    margin: 0;
    font-size: 27.7px;
    color: #0f1a5e;
}
.card p span {
    width: 301px;
    white-space: nowrap;
}
.card em {
    margin-bottom: 2px;
    font-style: normal;
    color: #a1a4c4;
}
.card .badge {
    width: 34px;
    height: 34px;
    margin: 1px 0 0 1px;
    background: #a8a8b8;
    border-radius: 7px;
    color: white;
    font-size: 24px;
    font-weight: bold;
    line-height: 34px;
    text-align: center;
}
.card .late {
    padding-top: 4px;
    font-size: 36px;
    font-weight: bold;
    color: black;
}
.global { color: #cbbf5f; }
.agenda { color: #896b80; }
.projets { color: #75719f; }
.client { color: #7a9860; }
.fournisseur { color: #79a0ae; }
.contrat { color: #7abaab; }
.banque { color: #b4ba6a; }
.rh { color: #7c6a52; }
.conges { color: #725a36; }
.fabrication { color: #b0a763; }

/* boxes */
.boxes {
    display: flex;
    justify-content: space-between;
    margin-top: 110px;
}
.column {
    width: 1409px;
}
.box {
    background: white;
    border: 2px solid #d6d6d8;
    border-radius: 12px;
    overflow: hidden;
}
.contracts {
    height: 169px;
    margin-bottom: 78px;
}
.box-title {
    display: flex;
    align-items: center;
    height: 91px;
    padding: 0 20px 2px 24px;
    background: #f0f0f3;
    color: #3c3c50;
}
.box-title .warning {
    width: 32px;
    height: 28px;
    margin-right: 6px;
}
.box-tools {
    display: flex;
    margin-left: auto;
    gap: 19px;
    color: #a8a8b4;
}
.box-tools .tie {
    width: 27px;
    color: #c2bbac;
}
.box-tools .times {
    width: 21px;
}
.box-tools .filter {
    width: 24px;
    margin-right: 6px;
    color: #b4b4ba;
}
.contract-row {
    display: grid;
    grid-template-columns: 447px 300px 360px 1fr;
    align-items: center;
    height: 76px;
    padding: 0 85px 2px 24px;
}
.who {
    color: #0f1a5e;
}
.who .icon {
    margin-right: 7px;
    vertical-align: -4px;
}
.center {
    text-align: center;
}
.days {
    justify-self: end;
    width: 52px;
    height: 37px;
    margin-top: 2px;
    background: #b3933f;
    border-radius: 8px;
    color: white;
    font-size: 26px;
    line-height: 37px;
    text-align: center;
}
.orders {
    height: 500px;
}
.charts {
    display: flex;
    padding-left: 16px;
}
.chart {
    flex-shrink: 0;
    width: 656px;
    margin-right: 64px;
}
.chart h4 {
    margin: 31px 0 0;
    font-weight: normal;
    line-height: 36px;
    text-align: center;
}
.legend {
    display: flex;
    justify-content: center;
    gap: 19px;
    margin-top: 30px;
    font-size: 24px;
    line-height: 26px;
    color: #666;
}
.legend span {
    display: flex;
}
.legend i {
    width: 32px;
    height: 26px;
    margin-right: 11px;
}
.y2024 {
    background: #8e6aa5;
    border: 2px solid #855e9e;
}
.y2025 {
    background: #669ab8;
    border: 2px solid #5890b0;
}
.y2026 {
    background: #f2c373;
    border: 2px solid #efbd68;
}
.plot {
    display: flex;
    padding-left: 78px;
    font-size: 24px;
    color: #666;
}
.plot span {
    width: 40px;
    padding-top: 4px;
}
.grid {
    width: 467px;
    height: 200px;
    margin-top: 18px;
    border-top: 2px solid #e5e5e5;
    background: repeating-linear-gradient(to right, #e0e0e0 0 2px, transparent 2px 37.5px) 14px 0 no-repeat;
}

.highlight {
    position: absolute;
    left: 520px;
    top: 1463px;
    width: 1584px;
    height: 247px;
    fill: none;
    stroke: #ea3829;
    stroke-width: 8px;
}
```
